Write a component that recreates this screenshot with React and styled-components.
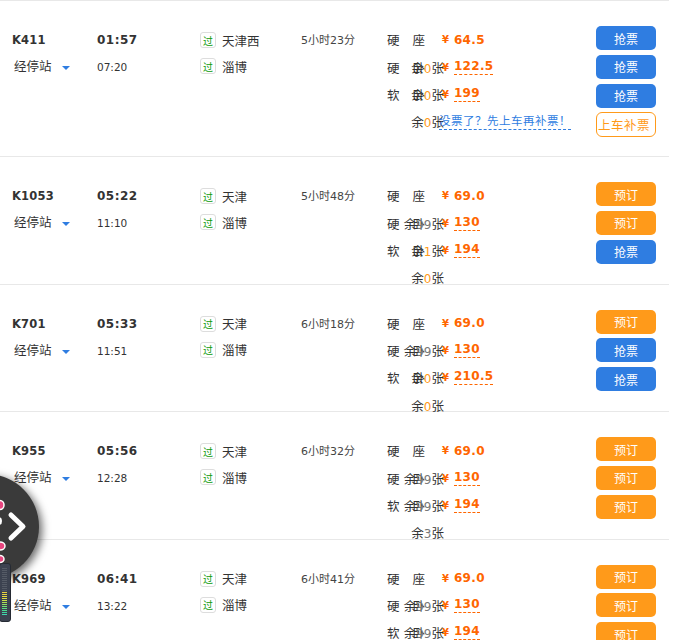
import React from 'react';
import styled, { createGlobalStyle } from 'styled-components';

const GlobalStyle = createGlobalStyle`
  html, body {
    margin: 0;
    padding: 0;
    background: #fff;
    overflow: hidden;
  }
  body {
    width: 680px;
    height: 640px;
    font-family: 'DejaVu Sans', 'Noto Sans CJK SC', sans-serif;
    color: #333;
  }
`;

const List = styled.div`
  width: 669px;
`;

const Card = styled.div`
  display: flex;
  align-items: flex-start;
  border-top: 1px solid #e8e8e8;
  padding-top: 25px;
  height: ${p => (p.$tall ? '130px' : '101.5px')};
`;

const TrainCol = styled.div`
  width: 85px;
  margin-left: 12px;
  padding-top: 6px;
`;

const TimeCol = styled.div`
  width: 103px;
  padding-top: 6px;
`;

const StationCol = styled.div`
  width: 101px;
  padding-top: 5px;
`;

const DurationCol = styled.div`
  width: 86px;
  padding-top: 7px;
  font-size: 11px;
  line-height: 16px;
  color: #444;
`;

const SeatCol = styled.div`
  width: 209px;
  height: 100px;
`;

const ButtonCol = styled.div`
  display: flex;
  flex-direction: column;
  gap: 4.8px;
`;

const TrainNo = styled.div`
  font-size: 11.5px;
  line-height: 16px;
  font-weight: 700;
  letter-spacing: 0.2px;
`;

const StopLink = styled.div`
  display: flex;
  align-items: center;
  margin: 11px 0 0 2px;
  font-size: 12.5px;
  line-height: 16px;
`;

const Caret = styled.span`
  width: 0;
  height: 0;
  margin-left: 10px;
  margin-top: 2px;
  border-left: 4px solid transparent;
  border-right: 4px solid transparent;
  border-top: 4px solid #2f7de1;
`;

const DepartTime = styled.div`
  font-size: 12px;
  line-height: 16px;
  font-weight: 700;
  letter-spacing: 0.5px;
`;

const ArriveTime = styled.div`
  margin-top: 11px;
  font-size: 10.5px;
  line-height: 16px;
`;

const StationRow = styled.div`
  display: flex;
  align-items: center;
  height: 18px;
  font-size: 12.5px;
  & + & {
    margin-top: 8px;
  }
`;

const PassTag = styled.span`
  display: flex;
  align-items: center;
  justify-content: center;
  width: 14px;
  height: 14px;
  margin-right: 6px;
  border: 1px solid #ddd;
  border-radius: 3px;
  color: #0a9a0a;
  font-size: 10px;
`;

const SeatRow = styled.div`
  display: flex;
  align-items: center;
  height: 27.4px;
  font-size: 12.5px;
`;

const SeatName = styled.span`
  width: 38px;
  flex: none;
  display: flex;
  justify-content: space-between;
`;

const Remain = styled.span`
  width: 60px;
  flex: none;
  margin-left: -41px;
  margin-right: -2px;
  text-align: right;
  white-space: nowrap;
  em {
    font-style: normal;
    font-size: 12px;
    color: ${p => (p.$dim ? '#777' : '#ff9a1a')};
  }
`;

const Price = styled.span`
  display: flex;
  align-items: center;
  margin-left: ${p => (p.$first ? '17px' : '0')};
  color: #f60;
  font-weight: 700;
  font-size: 12px;
  letter-spacing: 0.3px;
  small {
    font-size: 10px;
    margin-right: 5px;
    letter-spacing: 0;
  }
  span {
    border-bottom: ${p => (p.$first ? 'none' : '1px dashed #f60')};
    line-height: 15px;
    margin-top: ${p => (p.$first ? '1px' : '-1px')};
  }
`;

const ReissueLink = styled.a`
  margin-left: -3px;
  color: #2f7de1;
  font-size: 11.5px;
  letter-spacing: 0.5px;
  line-height: 15px;
  white-space: nowrap;
  border-bottom: 1px dashed #2f7de1;
`;

const ActionButton = styled.button`
  width: 60px;
  height: 24px;
  padding: 0;
  font-family: inherit;
  font-size: 12px;
  color: #fff;
  border: none;
  border-radius: 5px;
  background: ${p => (p.$kind === 'book' ? '#ff9a1a' : '#2f7de1')};
`;

const ReissueButton = styled.button`
  width: 60px;
  height: 25px;
  padding: 0 4px 0 0;
  font-family: inherit;
  font-size: 12.5px;
  letter-spacing: 0.5px;
  white-space: nowrap;
  color: #ff9a1a;
  background: #fff;
  border: 1px solid #ff9a1a;
  border-radius: 6px;
`;

const FloatBall = styled.div`
  position: fixed;
  left: -66px;
  top: 474px;
  width: 105px;
  height: 105px;
  border-radius: 50%;
  background: #3a3a3a;
  box-shadow: 3px 3px 8px rgba(0, 0, 0, 0.6);
`;

const BallIcon = styled.svg`
  position: absolute;
  left: 66px;
  top: 0;
`;

const Meter = styled.div`
  position: fixed;
  left: -1px;
  top: 563px;
  display: flex;
  flex-direction: column-reverse;
  gap: 1px;
  width: 5px;
  height: 47px;
  padding: 4px 3px 6px 2px;
  background: #3c4250;
  border: 1px solid #252a33;
  border-radius: 3px;
`;

const MeterBar = styled.i`
  display: block;
  height: 1px;
  flex: none;
  background: ${p => p.$color};
`;

const trains = [
  {
    no: 'K411', depart: '01:57', arrive: '07:20', from: '天津西', to: '淄博', duration: '5小时23分',
    seats: [
      { name: ['硬', '座'], price: '64.5' },
      { name: ['硬', '卧'], left: '0', price: '122.5' },
      { name: ['软', '卧'], left: '0', price: '199' },
      { name: null, left: '0', link: '没票了？先上车再补票！' },
    ],
    buttons: ['grab', 'grab', 'grab', 'reissue'],
  },
  {
    no: 'K1053', depart: '05:22', arrive: '11:10', from: '天津', to: '淄博', duration: '5小时48分',
    seats: [
      { name: ['硬', '座'], price: '69.0' },
      { name: ['硬', '卧'], left: '99', dim: true, price: '130' },
      { name: ['软', '卧'], left: '1', price: '194' },
      { name: null, left: '0' },
    ],
    buttons: ['book', 'book', 'grab'],
  },
  {
    no: 'K701', depart: '05:33', arrive: '11:51', from: '天津', to: '淄博', duration: '6小时18分',
    seats: [
      { name: ['硬', '座'], price: '69.0' },
      { name: ['硬', '卧'], left: '99', dim: true, price: '130' },
      { name: ['软', '卧'], left: '0', price: '210.5' },
      { name: null, left: '0' },
    ],
    buttons: ['book', 'grab', 'grab'],
  },
  {
    no: 'K955', depart: '05:56', arrive: '12:28', from: '天津', to: '淄博', duration: '6小时32分',
    seats: [
      { name: ['硬', '座'], price: '69.0' },
      { name: ['硬', '卧'], left: '99', dim: true, price: '130' },
      { name: ['软', '卧'], left: '99', dim: true, price: '194' },
      { name: null, left: '3', dim: true },
    ],
    buttons: ['book', 'book', 'book'],
  },
  {
    no: 'K969', depart: '06:41', arrive: '13:22', from: '天津', to: '淄博', duration: '6小时41分',
    seats: [
      { name: ['硬', '座'], price: '69.0' },
      { name: ['硬', '卧'], left: '99', dim: true, price: '130' },
      { name: ['软', '卧'], left: '99', dim: true, price: '194' },
    ],
    buttons: ['book', 'book', 'book'],
  },
];

// 아래에서 위로: 청록, 초록, 노랑, 꺼진 칸
const meterColors = [
  '#3fd6b0', '#3fd6a0', '#48dc90', '#5ce080', '#74e070', '#90e060', '#aee050', '#c8e048',
  '#e0e040', '#e8dc40', '#e8d840', '#e8d440', '#555b66', '#555b66', '#555b66', '#555b66',
  '#555b66', '#555b66', '#555b66', '#555b66', '#555b66', '#555b66', '#555b66', '#555b66',
];

function SeatLine({ seat }) {
  return (
    <SeatRow>
      <SeatName>
        {seat.name && (
          <>
            <span>{seat.name[0]}</span>
            <span>{seat.name[1]}</span>
          </>
        )}
      </SeatName>
      {seat.left !== undefined && (
        <Remain $dim={seat.dim}>
          余<em>{seat.left}</em>张
        </Remain>
      )}
      {seat.price && (
        <Price $first={seat.left === undefined}>
          <small>¥</small>
          <span>{seat.price}</span>
        </Price>
      )}
      {seat.link && <ReissueLink>{seat.link}</ReissueLink>}
    </SeatRow>
  );
}

function TrainCard({ train }) {
  return (
    <Card $tall={train.buttons.length === 4}>
      <TrainCol>
        <TrainNo>{train.no}</TrainNo>
        <StopLink>
          经停站
          <Caret />
        </StopLink>
      </TrainCol>
      <TimeCol>
        <DepartTime>{train.depart}</DepartTime>
        <ArriveTime>{train.arrive}</ArriveTime>
      </TimeCol>
      <StationCol>
        <StationRow>
          <PassTag>过</PassTag>
          {train.from}
        </StationRow>
        <StationRow>
          <PassTag>过</PassTag>
          {train.to}
        </StationRow>
      </StationCol>
      <DurationCol>{train.duration}</DurationCol>
      <SeatCol>
        {train.seats.map((seat, i) => (
          <SeatLine seat={seat} key={i} />
        ))}
      </SeatCol>
      <ButtonCol>
        {train.buttons.map((kind, i) =>
          kind === 'reissue' ? (
            <ReissueButton key={i}>上车补票</ReissueButton>
          ) : (
            <ActionButton $kind={kind} key={i}>
              {kind === 'book' ? '预订' : '抢票'}
            </ActionButton>
          ),
        )}
      </ButtonCol>
    </Card>
  );
}

export default function App() {
  return (
    <>
      <GlobalStyle />
      <List>
        {trains.map(train => (
          <TrainCard train={train} key={train.no} />
        ))}
      </List>
      <FloatBall>
        <BallIcon width="40" height="105" viewBox="0 0 40 105">
          <path d="M11 41 L23 52.5 L11 64" fill="none" stroke="#fff" strokeWidth="5" strokeLinecap="round" strokeLinejoin="round" />
          <ellipse cx="0" cy="31" rx="4" ry="4.5" fill="#e8457f" stroke="#fff" strokeWidth="1.5" />
          <ellipse cx="-1" cy="47" rx="3" ry="4" fill="#fff" />
          <ellipse cx="0" cy="72" rx="5" ry="4" fill="#e8457f" stroke="#fff" strokeWidth="1.5" />
          <ellipse cx="0" cy="85" rx="4" ry="3.5" fill="#e8457f" stroke="#fff" strokeWidth="1.5" />
        </BallIcon>
      </FloatBall>
      <Meter>
        {meterColors.map((c, i) => (
          <MeterBar $color={c} key={i} />
        ))}
      </Meter>
    </>
  );
}
